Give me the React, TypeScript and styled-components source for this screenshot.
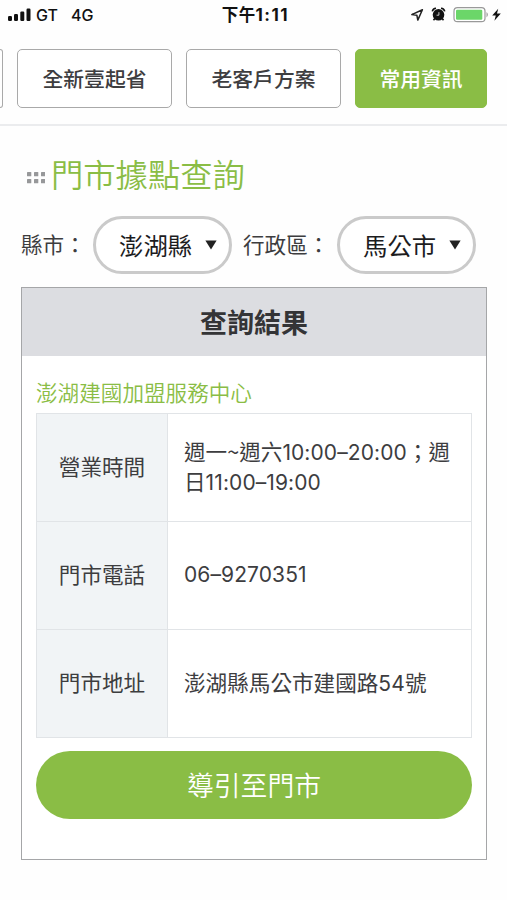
import React from "react";
import styled, { createGlobalStyle, css } from "styled-components";

const GREEN = "#8abd45";

const GlobalStyle = createGlobalStyle`
  * { box-sizing: border-box; }
  body {
    margin: 0;
    background: #fefefe;
    color: #3d3d3f;
    font-family: "Noto Sans CJK TC", sans-serif;
  }
`;

const Screen = styled.div`
  width: 507px;
  height: 900px;
  overflow: hidden;
`;

const StatusBar = styled.header`
  display: grid;
  grid-template-columns: 1fr auto 1fr;
  align-items: center;
  height: 30px;
  padding: 0 6px 0 8px;
  color: #111;
  font: 500 16px/30px Inter, "Noto Sans CJK TC", sans-serif;
`;

const Carrier = styled.div`
  display: flex;
  align-items: center;
  gap: 5px;
  span + span { margin-left: 8px; }
`;

const Clock = styled.div`
  padding-left: 2px;
  font-size: 16.5px;
  font-weight: 700;
  letter-spacing: 0.3px;
  span {
    font-size: 17px;
    letter-spacing: 1.5px;
  }
`;

const Indicators = styled.div`
  display: flex;
  align-items: center;
  justify-content: flex-end;
`;

const Nav = styled.nav`
  display: flex;
  gap: 14px;
  height: 96px;
  padding-top: 19px;
  border-bottom: 2px solid #ebecee;
`;

const NavButton = styled.button<{ $width: number; $active?: boolean; $cut?: boolean }>`
  flex: none;
  width: ${(p) => p.$width}px;
  height: 59px;
  padding: 0 0 2px;
  border: 1.5px solid #a9a9a9;
  border-radius: 5px;
  background: #fff;
  color: #3d3d3f;
  font: 500 20.8px/30px "Noto Sans CJK TC", sans-serif;
  ${(p) => p.$active && css`
    border-color: ${GREEN};
    background: ${GREEN};
    color: #fff;
  `}
  ${(p) => p.$cut && css`
    border-left: 0;
    border-radius: 0 5px 5px 0;
  `}
`;

const Heading = styled.h1`
  display: flex;
  align-items: center;
  gap: 6px;
  height: 48px;
  margin: 23px 0 0 27px;
  color: ${GREEN};
  font-size: 32.3px;
  font-weight: 350;
  line-height: 48px;
  svg { margin-top: 9px; }
`;

const Filters = styled.div`
  display: flex;
  align-items: center;
  height: 58px;
  margin: 19px 0 0 21px;
`;

const Label = styled.span<{ $width: number }>`
  flex: none;
  width: ${(p) => p.$width}px;
  padding-bottom: 2px;
  font-size: 21.6px;
  line-height: 30px;
  white-space: nowrap;
`;

const Select = styled.button<{ $gap: number }>`
  flex: none;
  display: flex;
  align-items: center;
  width: 139px;
  height: 58px;
  margin-right: ${(p) => p.$gap}px;
  padding: 0 0 0 23px;
  border: 3px solid #cacaca;
  border-radius: 29px;
  background: #fff;
  color: #1c1c1e;
  font: 400 24.4px/36px "Noto Sans CJK TC", sans-serif;
  svg { margin-left: 13px; }
`;

const Panel = styled.section`
  width: 466px;
  height: 573px;
  margin: 13px 0 0 21px;
  border: 1.5px solid #a5a6a8;
  background: #fff;
`;

const PanelTitle = styled.h2`
  height: 68px;
  margin: 0;
  background: #dcdde1;
  color: #343436;
  font-size: 27px;
  font-weight: 700;
  line-height: 67px;
  text-align: center;
`;

const PanelBody = styled.div`
  padding: 21px 14px 0;
`;

const StoreName = styled.h3`
  height: 36px;
  margin: 0;
  color: ${GREEN};
  font-size: 21.6px;
  font-weight: 350;
  line-height: 29px;
`;

const Table = styled.dl`
  margin: 0;
  border: 1px solid #e1e4e7;
  border-width: 1px 1px 0;
`;

const Row = styled.div`
  display: grid;
  grid-template-columns: 131px 1fr;
  height: 108px;
  border-bottom: 1px solid #e1e4e7;
  font-size: 21.6px;
  line-height: 30px;
`;

const Term = styled.dt`
  display: flex;
  align-items: center;
  justify-content: center;
  padding-bottom: 4px;
  border-right: 1px solid #e1e4e7;
  background: #f1f4f6;
`;

const Detail = styled.dd`
  display: flex;
  align-items: center;
  margin: 0;
  padding: 0 0 4px 16px;
  white-space: nowrap;
  > span { padding-top: 2px; }
`;

const Num = styled.span`
  font-family: Inter, sans-serif;
  font-size: 21px;
  line-height: 1;
  letter-spacing: 0.1px;
`;

const GuideButton = styled.button`
  width: 100%;
  height: 68px;
  margin-top: 13px;
  padding: 0 0 1px;
  border: 0;
  border-radius: 34px;
  background: ${GREEN};
  color: #fff;
  font: 350 26.8px/40px "Noto Sans CJK TC", sans-serif;
`;

const SignalIcon = () => (
  <svg width="23" height="14" viewBox="0 0 23 14" fill="#111">
    <rect x="0" y="8" width="4" height="5" rx="1.2" />
    <rect x="6" y="6" width="4" height="7" rx="1.2" />
    <rect x="12.3" y="3.5" width="4" height="9.5" rx="1.2" />
    <rect x="18.5" y="0.5" width="4" height="12.5" rx="1.2" />
  </svg>
);

const StatusIcons = () => (
  <svg width="91" height="18" viewBox="410 6 91 18">
    <path d="M422.4 9.8 L411.8 14.6 L416.9 15.3 L417.8 20.1 Z" fill="none" stroke="#222" strokeWidth="1.5" strokeLinejoin="round" />
    <circle cx="438.5" cy="14.8" r="5.8" fill="#111" />
    <path d="M432.3 11.4 A4 4 0 0 1 436 8.2 M441 8.2 A4 4 0 0 1 444.7 11.4 M434.8 18.6 l-1.3 1.7 M442.2 18.6 l1.3 1.7" fill="none" stroke="#111" strokeWidth="1.6" />
    <path d="M438.9 12.2 V15.2 H436.6" fill="none" stroke="#ddd" strokeWidth="0.9" />
    <rect x="454" y="7.7" width="31" height="14" rx="3.5" fill="#fff" stroke="#999" strokeWidth="1.2" />
    <rect x="456" y="9.7" width="26.3" height="10" rx="1.2" fill="#6bd669" />
    <path d="M486.5 12 Q489.3 14.7 486.5 17.4 Z" fill="#999" />
    <path d="M498.2 8.8 L492.2 15.6 H495.8 L494.4 20.8 L500.8 13.6 H497 Z" fill="#111" />
  </svg>
);

const GridDots = () => (
  <svg width="18" height="12" viewBox="0 0 18 12" fill="#97989a">
    {[0, 7, 14].map((x) =>
      [0, 7].map((y) => <rect key={`${x}-${y}`} x={x} y={y} width="4.3" height="4.3" rx="0.6" />)
    )}
  </svg>
);

const Caret = () => (
  <svg width="12" height="10" viewBox="0 0 12 10" fill="#222">
    <path d="M0.4 0.4 H11.6 L6 9.6 Z" />
  </svg>
);

export default function App() {
  return (
    <Screen>
      <GlobalStyle />
      <StatusBar>
        <Carrier>
          <SignalIcon />
          <span>GT</span>
          <span>4G</span>
        </Carrier>
        <Clock>下午<span>1:11</span></Clock>
        <Indicators>
          <StatusIcons />
        </Indicators>
      </StatusBar>
      <Nav>
        <NavButton $width={3} $cut aria-label="上一項" />
        <NavButton $width={155}>全新壹起省</NavButton>
        <NavButton $width={155}>老客戶方案</NavButton>
        <NavButton $width={132} $active>常用資訊</NavButton>
      </Nav>
      <main>
        <Heading>
          <GridDots />
          門市據點查詢
        </Heading>
        <Filters>
          <Label $width={72}>縣市：</Label>
          <Select $gap={11}>澎湖縣<Caret /></Select>
          <Label $width={94}>行政區：</Label>
          <Select $gap={0}>馬公市<Caret /></Select>
        </Filters>
        <Panel>
          <PanelTitle>查詢結果</PanelTitle>
          <PanelBody>
            <StoreName>澎湖建國加盟服務中心</StoreName>
            <Table>
              <Row>
                <Term>營業時間</Term>
                <Detail>
                  <div>
                    週一~週六<Num>10:00–20:00</Num>；週
                    <br />
                    日<Num>11:00–19:00</Num>
                  </div>
                </Detail>
              </Row>
              <Row>
                <Term>門市電話</Term>
                <Detail><Num>06–9270351</Num></Detail>
              </Row>
              <Row>
                <Term>門市地址</Term>
                <Detail>
                  <div>澎湖縣馬公市建國路<Num>54</Num>號</div>
                </Detail>
              </Row>
            </Table>
            <GuideButton>導引至門市</GuideButton>
          </PanelBody>
        </Panel>
      </main>
    </Screen>
  );
}
